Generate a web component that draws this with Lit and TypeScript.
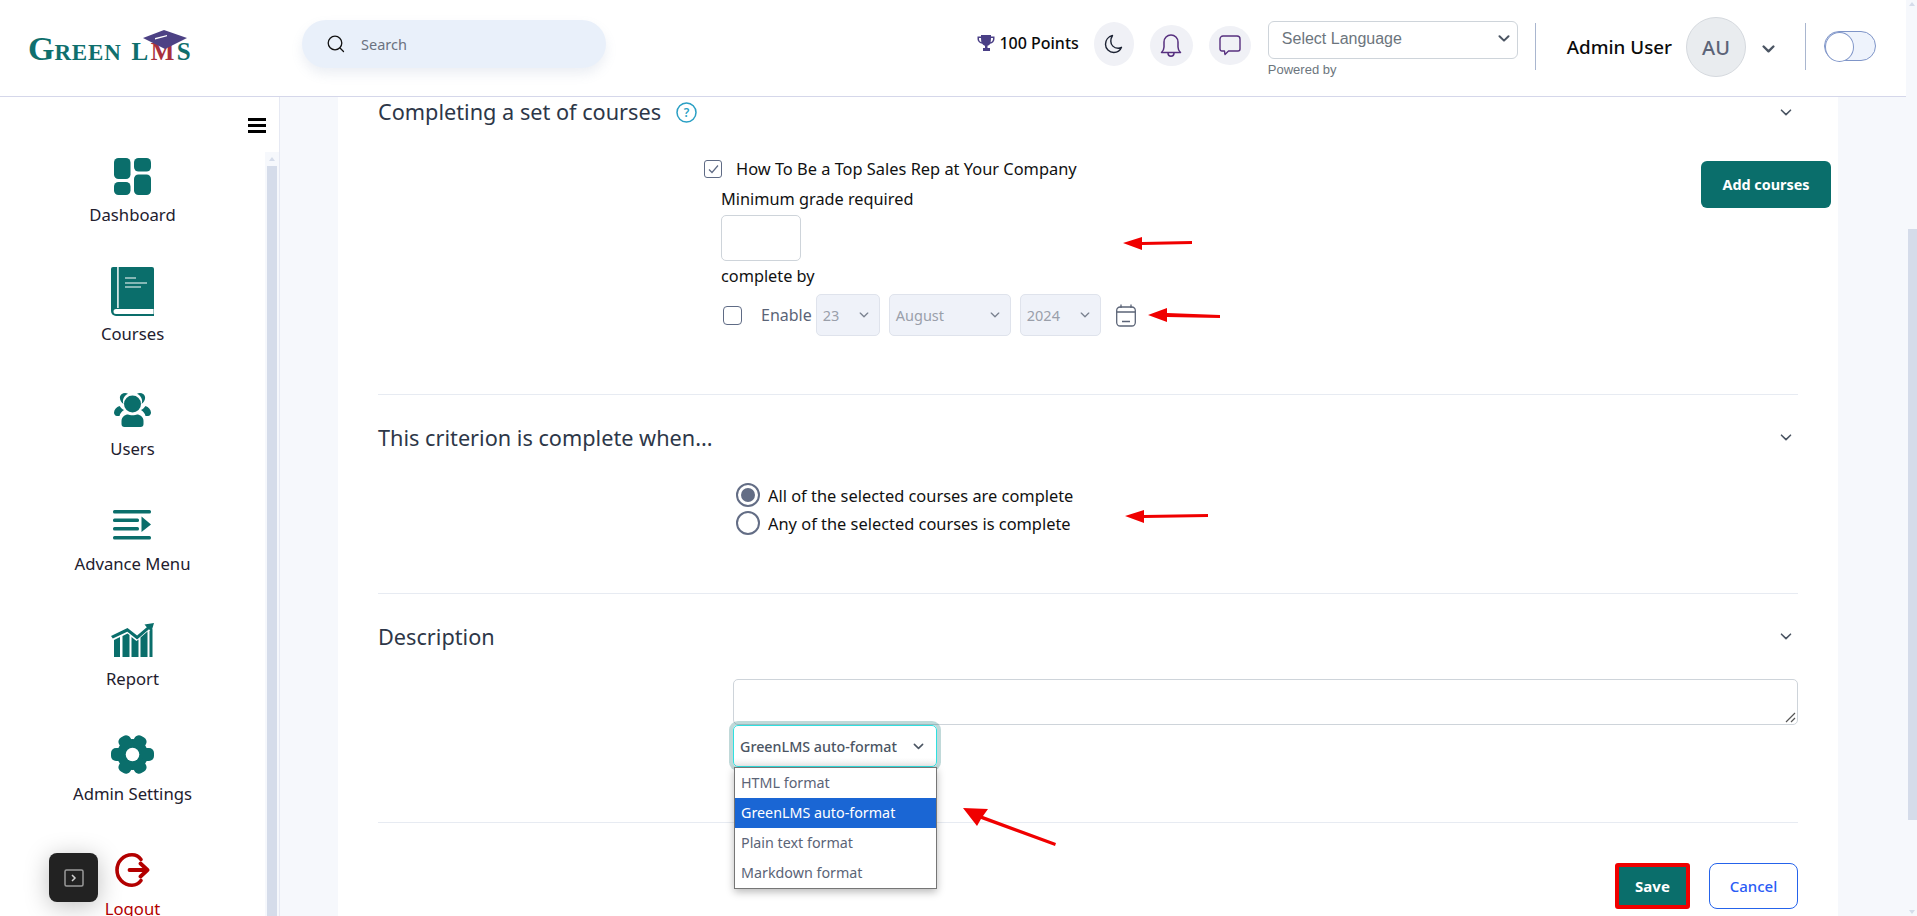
import { LitElement, html, css } from "lit";
import { customElement } from "lit/decorators.js";

const chev = (w = 12, c = "#4b5563", sw = 1.6) => html`<svg class="chev" width=${w} height=${Math.round(w * 0.6)} viewBox="0 0 12 7" fill="none" stroke=${c} stroke-width=${sw} stroke-linecap="round" stroke-linejoin="round"><path d="M1.5 1.2 6 5.6l4.500-4.400"/></svg>`;

const T = "#0a6e6b";
const nav = [
  { label: "Dashboard", h: 116, g: 8, icon: html`<svg width="37" height="37" viewBox="0 0 37 37" fill="${T}"><rect x="0" y="0" width="16.5" height="21" rx="4.5"/><rect x="20" y="0" width="17" height="13.5" rx="4.5"/><rect x="0" y="24" width="16.5" height="13" rx="4.5"/><rect x="20" y="16.5" width="17" height="20.5" rx="4.5"/></svg>` },
  { label: "Courses", h: 119, g: 6, icon: html`<svg width="43" height="49" viewBox="0 0 43 49"><path fill="${T}" d="M2 0h39a2 2 0 0 1 2 2v47h-38a5 5 0 0 1-5-5V2a2 2 0 0 1 2-2z"/><rect x="6" y="0" width="1.8" height="41" fill="#cfe3e2"/><path fill="#fff" d="M5 42h37.6v5H5a2.500 2.500 0 0 1 0-5z"/><path stroke="#fff" stroke-width="1.200" d="M14 11h11M14 16h22M14 20h16"/></svg>` },
  { label: "Users", h: 115, g: 10, icon: html`<svg width="37" height="34" viewBox="0 0 37 34" fill="${T}"><circle cx="18.500" cy="11" r="8.500"/><path d="M10.500 34a3 3 0 0 1-3-3v-3c0-4 3.500-6.500 6.500-6.500 1.500 1 7.500 1 9 0 3 0 6.500 2.500 6.500 6.500v3a3 3 0 0 1-3 3z"/><path d="M7.500 1.200C9.500-.300 12-.300 14 .700 11.500 1.700 9.500 4 9 7c-.2 1.500 0 3 .5 4C6 9 4.500 3.700 7.500 1.200zM29.500 1.200C27.500-.300 25-.300 23 .700c2.500 1 4.500 3.300 5 6.300.2 1.500 0 3-.5 4C31 9 32.500 3.700 29.500 1.200z"/><path d="M5.500 13c1 1.500 2.500 3 4.500 4-2.500 1.500-4 3.500-4.500 6H3C1 23 0 21 0 19.500c.300-3 2.500-5.500 5.500-6.500zM31.500 13c-1 1.500-2.500 3-4.500 4 2.500 1.500 4 3.500 4.500 6H34c2 0 3-2 3-3.500-.3-3-2.500-5.500-5.500-6.500z"/></svg>` },
  { label: "Advance Menu", h: 115, g: 12, icon: html`<svg width="38" height="30" viewBox="0 0 38 30" fill="${T}"><rect x="0" y="0" width="38" height="3.600" rx="1.500"/><rect x="0" y="8.500" width="26" height="3.600" rx="1.500"/><rect x="0" y="17" width="26" height="3.600" rx="1.500"/><rect x="0" y="26" width="38" height="3.600" rx="1.500"/><path d="M28.500 6.500 38 14.500l-9.500 7.500z"/></svg>` },
  { label: "Report", h: 115, g: 10, icon: html`<svg width="43" height="34" viewBox="0 0 43 34" fill="${T}"><path d="M43 0 33.500 1.500l2.300 2.700-9.700 8.300-9.600-7.500L0 13l1.800 2.400L16.300 8.800l9.800 7.600L38 6.200l2.300 2.700z"/><path d="M3 17l6-3v20H3zM11.500 13l5-2.500 2 1.500V34h-7zM20.500 14l5 4 2-1.500V34h-7zM29.500 14.500l7-6V34h-7zM38.500 8l3-2V34h-3z"/></svg>` },
  { label: "Admin Settings", h: 115, g: 7, icon: html`<svg width="43" height="41" viewBox="0 0 43 41" fill="${T}"><g transform="translate(21.5 20.500)"><circle r="15.500"/><rect x="-6.500" y="-21.500" width="13" height="43" rx="5" transform="rotate(90)"/><rect x="-6.500" y="-20.500" width="13" height="41" rx="5" transform="rotate(30)"/><rect x="-6.500" y="-20.500" width="13" height="41" rx="5" transform="rotate(150)"/></g><circle cx="21.500" cy="20.500" r="6.800" fill="#fff"/></svg>` },
  { label: "Logout", h: 115, g: 10, red: true, icon: html`<svg width="35" height="34" viewBox="0 0 35 34" fill="none" stroke="#b30000" stroke-width="3.600" stroke-linecap="round" stroke-linejoin="round"><path d="M26 6.500C23.500 3 20 1.800 17 1.800 8.500 1.800 2 8.500 2 17s6.500 15.200 15 15.200c3 0 6.500-1.200 9-4.700"/><path stroke-width="3.800" d="M14.500 17h18M25.500 10.500 32.500 17l-7 6.500"/></svg>` },
];

@customElement("app-root")
export class AppRoot extends LitElement {
  static styles = css`
    :host { display: block; position: relative; width: 100%; height: 100vh; overflow: hidden; font-family: "Noto Sans", "Open Sans", sans-serif; color: #111; background: #f6f8fc; }
    * { box-sizing: border-box; }
    .page { display: flex; height: 100%; }
    .column { flex: 1; min-width: 0; display: flex; flex-direction: column; }

    .top { height: 97px; flex: none; background: #fff; border-bottom: 1.5px solid #d5d7ea; display: flex; align-items: flex-start; padding-right: 30px; }
    .logo { position: relative; margin: 32px 0 0 28px; width: 164px; height: 34px; font-family: "Liberation Serif", serif; font-weight: 700; color: #0f6f6d; white-space: nowrap; line-height: 34px; font-size: 23px; letter-spacing: .8px; }
    .logo .g { font-size: 34px; letter-spacing: 0; }
    .logo .lms { font-size: 25px; letter-spacing: 2.500px; }
    .logo .m { color: #a9303d; }
    .logo .sp { display: inline-block; width: 10px; }
    .logo svg { position: absolute; left: 115px; top: -2px; }
    .search { margin: 20px 0 0 110px; width: 304px; height: 48px; border-radius: 24px; background: #e9f0fa; box-shadow: 0 6px 12px rgba(120,140,180,.14); display: flex; align-items: center; padding-left: 25px; gap: 16px; font-size: 14.500px; color: #6b7280; }
    .right { margin-left: auto; display: flex; align-items: flex-start; }
    .points { display: flex; align-items: center; gap: 4px; height: 24px; margin-top: 31px; font-size: 16px; font-weight: 500; color: #0b0b0b; }
    .round { display: flex; align-items: center; justify-content: center; background: #f0f1f6; border-radius: 50%; }
    .moon { width: 40px; height: 44px; margin: 22px 0 0 15px; }
    .bell { width: 43px; height: 41px; margin: 25px 0 0 16px; }
    .chat { width: 42px; height: 39px; margin: 26px 0 0 16px; }
    .lang { margin: 21px 0 0 17px; width: 250px; }
    .lang-box { height: 38px; border: 1px solid #ced4da; border-radius: 6px; display: flex; align-items: center; justify-content: space-between; padding: 0 7px 3px 13px; font: 16px "Liberation Sans", Arial, sans-serif; color: #6c757d; }
    .powered { margin-top: 3px; font: 13px/16px "Liberation Sans", Arial, sans-serif; color: #6c757d; }
    .vr { width: 1px; height: 47px; background: #a9b6cf; margin-top: 23px; }
    .v1 { margin-left: 17px; }
    .admin { margin: 34px 0 0 31px; font-size: 18.800px; line-height: 26px; font-weight: 500; color: #0b0b0b; }
    .avatar { width: 60px; height: 60px; margin: 17px 0 0 14px; border-radius: 50%; background: #e9ecef; border: 1px solid #d5d9de; display: flex; align-items: center; justify-content: center; font-size: 20px; font-weight: 500; color: #5c6478; }
    .caret { margin: 36px 0 0 16px; }
    .v2 { margin-left: 30px; }
    .toggle { margin: 31px 0 0 18px; width: 52px; height: 30px; border-radius: 15px; background: #eef3fc; border: 1px solid #7f95c8; position: relative; }
    .toggle::before { content: ""; position: absolute; left: 0; top: 0; width: 27px; height: 28px; border-radius: 50%; background: #fff; border: 1px solid #7f95c8; box-shadow: 0 0 0 1px #fff inset; }

    .body { flex: 1; min-height: 0; display: flex; }
    .side { width: 280px; flex: none; background: #fff; border-right: 1.5px solid #e6e9f3; position: relative; overflow: hidden; }
    .burger { position: absolute; left: 248px; top: 21px; width: 18px; height: 15px; border-top: 3.500px solid #000; border-bottom: 3.500px solid #000; }
    .burger::after { content: ""; display: block; margin-top: 2.500px; height: 3px; background: #000; }
    .items { display: flex; flex-direction: column; align-items: center; width: 265px; padding-top: 14px; }
    .item { display: flex; flex-direction: column; align-items: center; justify-content: flex-end; flex: none; font-size: 16.700px; line-height: 24px; font-weight: 400; color: #22202e; white-space: nowrap; }
    .item svg { display: block; }
    .item.red { color: #b30000; }
    .sb-track { position: absolute; left: 265px; top: 55px; bottom: 0; width: 14px; background: #f6f8fc; }
    .sb-arrow { position: absolute; left: 3.500px; top: 5px; border: 3.500px solid transparent; border-top: 0; border-bottom: 4px solid #d5dcea; }
    .sb-thumb { position: absolute; left: 2px; top: 14px; bottom: 0; width: 10px; background: #d5dcea; }

    .main { flex: 1; min-width: 0; padding: 0 68px 0 58px; background: #f6f8fc; overflow: hidden; }
    .card { background: #fff; height: 100%; padding: 0 40px; }
    .head { display: flex; align-items: center; height: 30px; font-size: 21.700px; line-height: 30px; color: #2d3748; }
    .head .end { margin: -9px 6px 0 auto; }
    .head2 .end { margin-top: -11px; }
    .help { margin-left: 15px; }
    .hr { height: 1px; background: #e7ebf2; }
    .sec1 { display: flex; justify-content: space-between; align-items: flex-start; padding-left: 326px; margin-top: 32px; }
    .add { margin: 2px -33px 0 0; width: 130px; height: 47px; background: #0a6e6b; color: #fff; border: 0; border-radius: 6px; font: 700 14.400px "Noto Sans", sans-serif; }
    .check { width: 18px; height: 18px; border: 1.500px solid #5f6b85; border-radius: 3px; display: flex; align-items: center; justify-content: center; flex: none; }
    .row { display: flex; align-items: center; }
    .course { height: 20px; gap: 14px; font-size: 16.400px; color: #111; }
    .course span:last-child { margin-bottom: 2px; }
    .sub { padding-left: 17px; font-size: 16.300px; height: 24px; line-height: 22px; color: #111; }
    .sub.box { height: auto; }
    .minlab { margin-top: 9px; }
    .num { width: 80px; height: 46px; margin-top: 3px; border: 1px solid #ced4da; border-radius: 5px; }
    .comp { margin-top: 4px; }
    .date { margin-top: 5px; height: 42px; }
    .date .check { width: 19px; height: 19px; margin-left: 2px; border-radius: 4px; }
    .en { margin: 0 4px 1px 19px; color: #5b6477; font-size: 16px; }
    .dd { height: 42px; background: #eff2f9; border: 1px solid #dfe3ec; border-radius: 5px; display: flex; align-items: center; justify-content: space-between; padding: 0 10px 1px 6px; font-size: 14.500px; color: #9a9faa; margin-right: 9px; }
    .sec-gap { margin-top: 58px; }
    .head2 { margin-top: 28px; line-height: 28px; }
    .radios { padding-left: 358px; margin-top: 30px; display: flex; flex-direction: column; gap: 4px; }
    .radio-row { display: flex; align-items: center; gap: 8px; height: 24px; font-size: 16.400px; color: #111; }
    .radio { width: 24px; height: 24px; border: 2px solid #636d85; border-radius: 50%; display: flex; align-items: center; justify-content: center; }
    .radio i { width: 14px; height: 14px; border-radius: 50%; background: #636d85; }
    .desc { margin: 27px 0 0 355px; position: relative; }
    .ta { height: 46px; border: 1px solid #ced4da; border-radius: 5px; position: relative; }
    .grip { position: absolute; right: 1px; bottom: 1px; }
    .fmt { width: 204px; height: 42px; margin-top: 0; border: 1px solid #2fe0e0; border-radius: 5px; box-shadow: 0 0 0 4px rgba(10,110,107,.26); background: linear-gradient(#fff 80%, #ececec); display: flex; align-items: center; justify-content: space-between; padding: 0 12px 0 6px; font-size: 14.300px; font-weight: 500; color: #4b5563; position: relative; }
    .menu { position: absolute; left: 1px; top: 88px; width: 203px; background: #fff; border: 1px solid #767676; box-shadow: 0 3px 8px rgba(0,0,0,.28); font-size: 14.300px; color: #5b6477; z-index: 3; }
    .menu div { height: 30px; line-height: 30px; padding-left: 6px; }
    .menu .on { background: #1a66d4; color: #fff; }
    .hr3 { margin-top: 55px; }
    .btns { display: flex; justify-content: flex-end; gap: 19px; margin-top: 40px; }
    .save { width: 75px; height: 46px; background: #0a6e6b; border: 4px solid #f00000; border-radius: 3px; color: #fff; font: 700 15px "Noto Sans", sans-serif; }
    .cancel { width: 89px; height: 46px; background: #fff; border: 1.500px solid #2563eb; border-radius: 8px; color: #2a5cf5; font: 500 15px "Noto Sans", sans-serif; }

    .psb { width: 11px; flex: none; background: #f6f8fc; position: relative; }
    .psb i { position: absolute; left: 2px; right: 0; top: 229px; height: 591px; background: #d5dcea; }
    .psb b { position: absolute; left: 3px; bottom: 2px; border: 3.500px solid transparent; border-bottom: 0; border-top: 4px solid #d5dcea; }
    .psb u { position: absolute; left: 3px; top: 2px; border: 3.500px solid transparent; border-top: 0; border-bottom: 4px solid #d5dcea; }

    .float { position: absolute; left: 49px; top: 853px; width: 49px; height: 49px; border-radius: 8px; background: #222; box-shadow: 0 4px 24px rgba(0,0,0,.25); display: flex; align-items: center; justify-content: center; z-index: 4; }
    .arrows { position: absolute; left: 0; top: 0; pointer-events: none; z-index: 5; }
  `;

  render() {
    return html`
      <div class="page">
        <div class="column">
          <header class="top">
            <div class="logo"><span class="g">G</span>REEN<span class="sp"></span><span class="lms">L<span class="m">M</span>S</span>
              <svg width="44" height="20" viewBox="0 0 44 20"><path fill="#4c4184" d="M21 0 44 8 22 19 0 8z"/><path fill="#fff" d="M12 8l12-3v1.200L12 9.400z"/></svg>
            </div>
            <div class="search">
              <svg width="18" height="18" viewBox="0 0 18 18" fill="none" stroke="#111" stroke-width="1.300" stroke-linecap="round"><circle cx="8" cy="8" r="6.800"/><path d="M13 13l3.500 3.500"/></svg>
              Search
            </div>
            <div class="right">
              <div class="points">
                <svg width="18" height="18" viewBox="0 0 18 18" fill="#4a3f86"><path d="M4 1h10v1.500h3.500V5c0 2.500-2 4.500-4.300 4.800-.7 1-1.500 1.700-2.700 2V14h2.500v3h-7v-3H8v-2.200C6.800 11.500 6 10.800 5.300 9.800 3 9.500.5 7.500.5 5V2.500H4zM2 4v1c0 1.500 1 2.700 2.400 3.200C4.200 7 4 5.500 4 4zm12 0c0 1.500-.2 3-.4 4.200C15 7.700 16 6.500 16 5V4z"/></svg>
                100 Points
              </div>
              <div class="round moon"><svg width="20" height="20" viewBox="0 0 20 20" fill="none" stroke="#1c2233" stroke-width="1.400" stroke-linecap="round" stroke-linejoin="round"><path d="M8.500 1.500C4.500 2.500 1.500 6 1.500 10.200c0 4.600 3.700 8.300 8.300 8.300 3.500 0 6.500-2.100 7.700-5.200-1 .6-2.200.9-3.400.9-4.300 0-7.300-3.200-7.300-7 0-2.200.6-4 1.700-5.700z"/></svg></div>
              <div class="round bell"><svg width="22" height="25" viewBox="0 0 22 25" fill="none" stroke="#57307f" stroke-width="1.500" stroke-linecap="round" stroke-linejoin="round"><path d="M1.500 19.500c1.500-1.500 2.500-2.500 2.500-5.500V9a7 7 0 0 1 14 0v5c0 3 1 4 2.500 5.500z"/><path d="M8 20c0 2 1.300 3.200 3 3.200s3-1.200 3-3.200"/></svg></div>
              <div class="round chat"><svg width="22" height="21" viewBox="0 0 22 21" fill="none" stroke="#57307f" stroke-width="1.400" stroke-linejoin="round"><path d="M4 1h14a3 3 0 0 1 3 3v10a2 2 0 0 1-2 2H9.500l-3.500 3.500-.5-3.500H3a2 2 0 0 1-2-2V4a3 3 0 0 1 3-3z"/></svg></div>
              <div class="lang">
                <div class="lang-box">Select Language ${chev(12, "#4b5563", 2)}</div>
                <div class="powered">Powered by</div>
              </div>
              <div class="vr v1"></div>
              <div class="admin">Admin User</div>
              <div class="avatar">AU</div>
              <div class="caret">${chev(13, "#4b5563", 2.2)}</div>
              <div class="vr v2"></div>
              <div class="toggle"></div>
            </div>
          </header>
          <div class="body">
            <aside class="side">
              <div class="burger"></div>
              <div class="items">
                ${nav.map((n) => html`
                  <div class="item ${n.red ? "red" : ""}" style="height:${n.h}px">
                    <span style="margin-bottom:${n.g}px">${n.icon}</span>
                    ${n.label}
                  </div>`)}
              </div>
              <div class="sb-track"><span class="sb-arrow"></span><span class="sb-thumb"></span></div>
            </aside>
            <main class="main">
              <div class="card">
                <div class="head">Completing a set of courses
                  <svg class="help" width="21" height="21" viewBox="0 0 21 21" fill="none"><circle cx="10.500" cy="10.500" r="9.500" stroke="#2a9fc4" stroke-width="1.500"/><text x="10.500" y="15" text-anchor="middle" font-family="Noto Sans, sans-serif" font-size="12" font-weight="600" fill="#2a9fc4">?</text></svg>
                  <span class="end">${chev()}</span>
                </div>
                <div class="sec1">
                  <div>
                    <div class="row course">
                      <span class="check"><svg width="11" height="10" viewBox="0 0 11 10" fill="none" stroke="#5f6b85" stroke-width="1.200"><path d="M1 5.500 4 8.500 10 1.500"/></svg></span>
                      <span>How To Be a Top Sales Rep at Your Company</span>
                    </div>
                    <div class="sub minlab">Minimum grade required</div>
                    <div class="sub box"><div class="num"></div></div>
                    <div class="sub comp">complete by</div>
                    <div class="sub row date">
                      <span class="check"></span>
                      <span class="en">Enable</span>
                      <span class="dd" style="width:64px">23 ${chev(10, "#7a8290")}</span>
                      <span class="dd" style="width:122px">August ${chev(10, "#7a8290")}</span>
                      <span class="dd" style="width:81px;margin-right:15px">2024 ${chev(10, "#7a8290")}</span>
                      <svg width="20" height="23" viewBox="0 0 20 23" fill="none" stroke="#5b6477" stroke-width="1.300"><rect x=".7" y="3" width="18.600" height="19" rx="3.500"/><path d="M.7 8h18.600M5 .5V4M15 .5V4M6 17.500h8"/></svg>
                    </div>
                  </div>
                  <button class="add">Add courses</button>
                </div>
                <div class="hr sec-gap"></div>
                <div class="head head2">This criterion is complete when...<span class="end">${chev()}</span></div>
                <div class="radios">
                  <div class="radio-row"><span class="radio"><i></i></span>All of the selected courses are complete</div>
                  <div class="radio-row"><span class="radio"></span>Any of the selected courses is complete</div>
                </div>
                <div class="hr sec-gap"></div>
                <div class="head head2">Description<span class="end">${chev()}</span></div>
                <div class="desc">
                  <div class="ta">
                    <svg class="grip" width="11" height="11" viewBox="0 0 11 11" stroke="#555" stroke-width="1.200"><path d="M1 10 10 1M6 10l4-4"/></svg>
                  </div>
                  <div class="fmt">GreenLMS auto-format ${chev(11, "#4b5563", 1.700)}</div>
                  <div class="menu">
                    <div>HTML format</div>
                    <div class="on">GreenLMS auto-format</div>
                    <div>Plain text format</div>
                    <div>Markdown format</div>
                  </div>
                </div>
                <div class="hr hr3"></div>
                <div class="btns">
                  <button class="save">Save</button>
                  <button class="cancel">Cancel</button>
                </div>
              </div>
            </main>
          </div>
        </div>
        <div class="psb"><u></u><i></i><b></b></div>
      </div>
      <div class="float"><svg width="20" height="18" viewBox="0 0 20 18" fill="none"><rect x="1" y="1" width="18" height="16" rx="1.500" stroke="#9a9a9a" stroke-width="1.500"/><path d="M8 6l3 3-3 3" stroke="#cfcfcf" stroke-width="1.500"/></svg></div>
      <svg class="arrows" width="1917" height="916" viewBox="0 0 1917 916" fill="#f00000">
        <path d="M1123 243 1142 237v5l50-1v3l-50 1v5z"/>
        <path d="M1148 315 1167 308v5l53 2v3l-53-1v5z"/>
        <path d="M1125 516 1144 510v5l64-1v3l-64 1v5z"/>
        <path d="M963 808 988 809 983 816 1056 843 1055 846 981 819 977 826z"/>
      </svg>
    `;
  }
}
